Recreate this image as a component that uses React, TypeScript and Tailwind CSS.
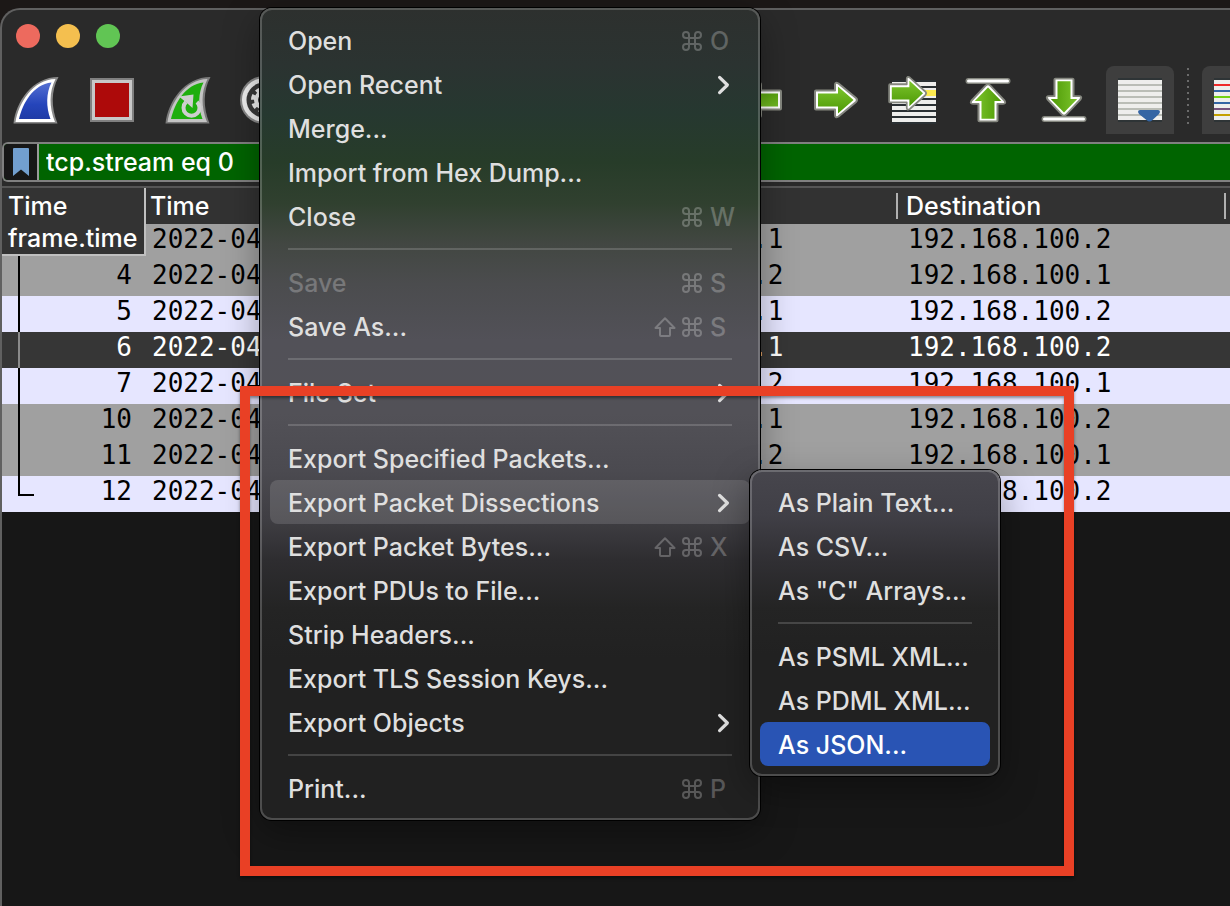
import type { ReactNode } from "react";
import { Folder, RefreshCw, Save, Search, X } from "lucide-react";

const SANS = "font-['Inter','Noto_Sans',sans-serif]";
const MONO = "font-['DejaVu_Sans_Mono','Liberation_Mono',monospace]";

type Packet = { no: string; src: string; dst: string; tone: "gray" | "lilac" | "selected" };

const packets: Packet[] = [
  { no: "", src: ".1", dst: "192.168.100.2", tone: "gray" },
  { no: "4", src: ".2", dst: "192.168.100.1", tone: "gray" },
  { no: "5", src: ".1", dst: "192.168.100.2", tone: "lilac" },
  { no: "6", src: ".1", dst: "192.168.100.2", tone: "selected" },
  { no: "7", src: ".2", dst: "192.168.100.1", tone: "lilac" },
  { no: "10", src: ".1", dst: "192.168.100.2", tone: "gray" },
  { no: "11", src: ".2", dst: "192.168.100.1", tone: "gray" },
  { no: "12", src: ".1", dst: "192.168.100.2", tone: "lilac" },
];

const tones = {
  gray: "bg-[#a0a0a0] text-black",
  lilac: "bg-[#e6e6ff] text-black",
  selected: "bg-[#363636] text-white",
};

type Item = {
  label: string;
  keys?: string;
  shift?: boolean;
  submenu?: boolean;
  disabled?: boolean;
  state?: "open" | "active";
};

const fileMenu: Item[][] = [
  [
    { label: "Open", keys: "O" },
    { label: "Open Recent", submenu: true },
    { label: "Merge..." },
    { label: "Import from Hex Dump..." },
    { label: "Close", keys: "W" },
  ],
  [
    { label: "Save", keys: "S", disabled: true },
    { label: "Save As...", keys: "S", shift: true },
  ],
  [{ label: "File Set", submenu: true }],
  [
    { label: "Export Specified Packets..." },
    { label: "Export Packet Dissections", submenu: true, state: "open" },
    { label: "Export Packet Bytes...", keys: "X", shift: true },
    { label: "Export PDUs to File..." },
    { label: "Strip Headers..." },
    { label: "Export TLS Session Keys..." },
    { label: "Export Objects", submenu: true },
  ],
  [{ label: "Print...", keys: "P" }],
];

const exportMenu: Item[][] = [
  [{ label: "As Plain Text..." }, { label: "As CSV..." }, { label: 'As "C" Arrays...' }],
  [
    { label: "As PSML XML..." },
    { label: "As PDML XML..." },
    { label: "As JSON...", state: "active" },
  ],
];

function CommandGlyph() {
  return (
    <svg viewBox="0 0 20 20" className="size-5" fill="none" stroke="currentColor" strokeWidth="2">
      <path d="M7 7V4a3 3 0 1 0-3 3h12a3 3 0 1 0-3-3v12a3 3 0 1 0 3-3H4a3 3 0 1 0 3 3V7" />
    </svg>
  );
}

function ShiftGlyph() {
  return (
    <svg viewBox="0 0 22 20" className="h-5 w-[22px]" fill="none" stroke="currentColor" strokeWidth="2" strokeLinejoin="round">
      <path d="M11 1.2 20.5 11H16v7a1 1 0 0 1-1 1H7a1 1 0 0 1-1-1v-7H1.5z" />
    </svg>
  );
}

function Menu({ groups, label, className }: { groups: Item[][]; label: string; className: string }) {
  return (
    <div
      role="menu"
      aria-label={label}
      className={`rounded-xl border-2 border-white/20 bg-origin-border p-2 text-[25px] leading-[38px] font-medium text-[#dfdfdf] ${className}`}
    >
      {groups.map((group, i) => (
        <div key={i} role="group">
          {i > 0 && (
            <div role="separator" className="flex h-[22px] items-center px-[18px]">
              <div className="h-0.5 w-full bg-white/16" />
            </div>
          )}
          {group.map((item) => (
            <button
              key={item.label}
              type="button"
              role="menuitem"
              disabled={item.disabled}
              className={`flex h-11 w-full items-center rounded-lg px-[18px] pt-0.5 text-left whitespace-nowrap ${
                item.state === "open" ? "bg-white/13" : ""
              } ${item.state === "active" ? "bg-[#2954b4] text-white" : ""}`}
            >
              <span className={`grow ${item.disabled ? "text-white/25" : ""}`}>{item.label}</span>
              {item.keys && (
                <span className="flex items-center gap-1.5 text-white/25">
                  {item.shift && <ShiftGlyph />}
                  <CommandGlyph />
                  <span className="w-6 pl-0.5">{item.keys}</span>
                </span>
              )}
              {item.submenu && (
                <svg viewBox="0 0 16 20" className="h-5 w-4" fill="none" stroke="currentColor" strokeWidth="3.2" strokeLinecap="round" strokeLinejoin="round">
                  <path d="M3.6 2.4 11.4 10l-7.8 7.6" />
                </svg>
              )}
            </button>
          ))}
        </div>
      ))}
    </div>
  );
}

function Tool({ label, pressed, children }: { label: string; pressed?: boolean; children: ReactNode }) {
  return (
    <button
      type="button"
      aria-label={label}
      className={`flex size-[68px] shrink-0 items-center justify-center rounded-t-lg text-[#d0d0d0] ${pressed ? "bg-[#3e3e3e]" : ""}`}
    >
      {children}
    </button>
  );
}

function ToolSeparator() {
  return (
    <div className="flex h-[62px] w-3 shrink-0 justify-center">
      <svg viewBox="0 0 2 62" className="h-full w-0.5">
        <path d="M1 2v60" stroke="#6b6b6b" strokeWidth="2" strokeDasharray="2 4" />
      </svg>
    </div>
  );
}

function Fin({ outer, rim, children }: { outer: string; rim: string; children: ReactNode }) {
  const d = "M1.500 47.500C4 26 20 1 46.500 1C39 15 39 31 45.500 47.500Z";
  return (
    <svg viewBox="0 0 48 48" className="size-12">
      <path d={d} fill={outer} />
      <path d="M3.500 46C6.500 27 21 3.500 43.500 3C37 16 37 31 43 46Z" fill={rim} />
      {children}
    </svg>
  );
}

const FIN_BODY = "M7 43C11 27 21 8.500 39.500 6.500C34 17 34 31 38.500 43Z";

function Arrow({ turn }: { turn: string }) {
  return (
    <g transform={turn}>
      <path
        d="M3 15.500q0-1 1-1h19V9q0-3.500 3.500-1.500L44 22q2 2 0 4L26.500 40.500Q23 42.500 23 39v-5.500H4q-1 0-1-1z"
        fill="#fff"
        stroke="#85877f"
        strokeWidth="2"
        strokeLinejoin="round"
      />
      <path d="M6 17.500h20v-6.500q0-.5.5 0L41.500 24 26.500 37q-.5.500-.5 0v-6.500H6z" fill="url(#green)" />
    </g>
  );
}

export default function App() {
  return (
    <div className={`flex min-h-screen flex-col bg-[#1c1817] pt-2 ${SANS}`}>
      <svg className="absolute size-0" aria-hidden="true">
        <defs>
          <linearGradient id="green" x1="0" y1="0" x2="0" y2="1">
            <stop offset="0" stopColor="#7cc42c" />
            <stop offset="1" stopColor="#4e9a06" />
          </linearGradient>
          <linearGradient id="blue" x1="0" y1="0" x2="0" y2="1">
            <stop offset="0" stopColor="#5570d2" />
            <stop offset="0.6" stopColor="#2545bb" />
            <stop offset="1" stopColor="#1f3ba6" />
          </linearGradient>
        </defs>
      </svg>

      <div className="flex grow flex-col overflow-hidden rounded-tl-[20px] border-t-2 border-l-2 border-[#606060] bg-[#2a2a2a]">
        <header className="flex h-[52px] items-center gap-4 pl-3.5">
          <button type="button" aria-label="Close window" className="size-6 rounded-full bg-[#ed6a5e]" />
          <button type="button" aria-label="Minimize window" className="size-6 rounded-full bg-[#f4bf4f]" />
          <button type="button" aria-label="Zoom window" className="size-6 rounded-full bg-[#61c554]" />
        </header>

        <div role="toolbar" aria-label="Capture" className="flex h-20 items-start gap-2 overflow-hidden pt-1">
          <Tool label="Start capture">
            <Fin outer="#8a8a8a" rim="#ffffff">
              <path d={FIN_BODY} fill="url(#blue)" />
            </Fin>
          </Tool>
          <Tool label="Stop capture">
            <svg viewBox="0 0 44 44" className="size-11">
              <path d="M0 0h44v44H0z" fill="#808080" />
              <path d="M2 2h40v40H2z" fill="#c8c8c8" />
              <path d="M5 5h34v34H5z" fill="#ad0a0a" />
            </svg>
          </Tool>
          <Tool label="Restart capture">
            <Fin outer="#7a7a7a" rim="#c4c4c4">
              <path d={FIN_BODY} fill="#1fae0e" />
              <path d="M33 26a8 8 0 1 1-11 0" fill="none" stroke="#cfcfcf" strokeWidth="4" />
              <path d="M15 20.500 29.500 18.500 28.500 32l-4.500-4z" fill="#cfcfcf" />
            </Fin>
          </Tool>
          <Tool label="Capture options">
            <svg viewBox="0 0 48 48" className="size-12">
              <circle cx="24" cy="24" r="24" fill="#8a8a8a" />
              <circle cx="24" cy="24" r="22" fill="#f0f0f0" />
              <circle cx="24" cy="24" r="17.500" fill="#3a3a3a" />
              <circle cx="24" cy="24" r="11" fill="none" stroke="#f0f0f0" strokeWidth="4" strokeDasharray="5 3.640" />
              <circle cx="24" cy="24" r="8" fill="none" stroke="#f0f0f0" strokeWidth="4" />
            </svg>
          </Tool>
          <ToolSeparator />
          <Tool label="Open file"><Folder size={40} /></Tool>
          <Tool label="Save file"><Save size={40} /></Tool>
          <Tool label="Close file"><X size={40} /></Tool>
          <Tool label="Reload file"><RefreshCw size={40} /></Tool>
          <ToolSeparator />
          <Tool label="Find packet"><Search size={40} /></Tool>
          <Tool label="Previous packet">
            <svg viewBox="0 0 48 48" className="size-12"><Arrow turn="rotate(180 24 24)" /></svg>
          </Tool>
          <Tool label="Next packet">
            <svg viewBox="0 0 48 48" className="size-12"><Arrow turn="" /></svg>
          </Tool>
          <Tool label="Go to packet">
            <svg viewBox="0 0 48 48" className="size-12">
              <path d="M4 4h44v44H4z" fill="#2a3033" />
              <path d="M4 6h44v4H4zM4 12h44v10H4zM4 24h44v4H4zM4 30h44v4H4zM4 36h44v4H4zM4 42h44v4H4z" fill="#eeeeec" />
              <path d="M34 14h14v6H34z" fill="#fce94f" />
              <Arrow turn="translate(-1.500 -5.500) scale(0.88 0.95)" />
            </svg>
          </Tool>
          <Tool label="First packet">
            <svg viewBox="0 0 48 48" className="size-12">
              <path d="M4.500 5h39" stroke="#85877f" strokeWidth="6" strokeLinecap="round" />
              <path d="M4.500 5h39" stroke="#fff" strokeWidth="3" strokeLinecap="round" />
              <Arrow turn="translate(0 48) rotate(-90) scale(0.88 1)" />
            </svg>
          </Tool>
          <Tool label="Last packet">
            <svg viewBox="0 0 48 48" className="size-12">
              <path d="M4.500 43h39" stroke="#85877f" strokeWidth="6" strokeLinecap="round" />
              <path d="M4.500 43h39" stroke="#fff" strokeWidth="3" strokeLinecap="round" />
              <Arrow turn="translate(48 0) rotate(90) scale(0.88 1)" />
            </svg>
          </Tool>
          <Tool label="Auto-scroll" pressed>
            <svg viewBox="0 0 44 44" className="size-11">
              <path d="M0 0h44v44H0z" fill="#2e3436" />
              <path d="M0 2h44v40H0z" fill="#eeeeec" />
              <path d="M0 7h44M0 13h44M0 19h44M0 25h44M0 31h44M0 37h44" stroke="#babdb6" strokeWidth="2" />
              <path d="M20 34q0-2 2-2h18q2 0 2 2l-1 2-6.500 6q-3 3-6 0L21 36z" fill="#3465a4" />
            </svg>
          </Tool>
          <ToolSeparator />
          <Tool label="Colorize" pressed>
            <svg viewBox="0 0 44 44" className="size-11">
              <path d="M0 0h44v44H0z" fill="#2e3436" />
              <path d="M0 2h44v40H0z" fill="#eeeeec" />
              <path d="M0 7h44" stroke="#ef2929" strokeWidth="2" />
              <path d="M0 13h44M0 25h44" stroke="#3465a4" strokeWidth="2" />
              <path d="M0 19h44" stroke="#73d216" strokeWidth="2" />
              <path d="M0 31h44" stroke="#75507b" strokeWidth="2" />
              <path d="M0 37h44" stroke="#c4a000" strokeWidth="2" />
            </svg>
          </Tool>
        </div>

        <div className="flex h-10 shrink-0 overflow-hidden rounded-l-md border-2 border-r-0 border-[#808080] bg-[#006400]">
          <button type="button" aria-label="Filter bookmarks" className="flex w-[35px] items-center justify-center border-r-2 border-[#9a9a9a] bg-[#171717]">
            <svg viewBox="0 0 16 28" className="h-7 w-4">
              <path d="M0 1q0-1 1-1h14q1 0 1 1v27l-8-6.500L0 28z" fill="#729fcf" />
            </svg>
          </button>
          <input
            aria-label="Display filter"
            defaultValue="tcp.stream eq 0"
            className="min-w-0 grow bg-transparent pt-0.5 pl-[7px] text-[25px] font-medium text-white outline-none"
          />
        </div>

        <main className="relative mt-1 flex grow flex-col border-t-2 border-[#555555] bg-[#171717]">
          <table className="w-full table-fixed border-collapse text-left">
            <colgroup>
              <col className="w-36" />
              <col className="w-[600px]" />
              <col className="w-[150px]" />
              <col />
            </colgroup>
            <thead className="bg-[#323232] text-[25px] leading-[30px] text-white">
              <tr className="h-9">
                <th aria-label="Number" className="p-0" />
                <th className="p-0 pl-1 font-medium">Time</th>
                <th aria-label="Source" className="p-0" />
                <th className="p-0 font-medium">
                  <div className="mr-1 flex h-[26px] items-center border-x-2 border-[#b0b0b0] pl-2">Destination</div>
                </th>
              </tr>
            </thead>
            <tbody className={`text-[26px] leading-[30px] ${MONO}`}>
              {packets.map((p, i) => (
                <tr key={i} className={`h-9 ${tones[p.tone]}`}>
                  <td className="p-0">
                    <div className="flex h-9 items-start pr-3.5">
                      <span className={`ml-4 w-4 border-l-2 ${p.tone === "selected" ? "border-[#8a8a8a]" : "border-black"} ${i === packets.length - 1 ? "h-5 border-b-2" : "h-9"}`} />
                      <span className="grow text-right">{p.no}</span>
                    </div>
                  </td>
                  <td className="p-0 pl-1.5 align-top">2022-04</td>
                  <td className="p-0 pl-1.5 align-top">{p.src}</td>
                  <td className="p-0 pl-3 align-top">{p.dst}</td>
                </tr>
              ))}
            </tbody>
          </table>
          <div role="tooltip" className="absolute top-0 left-0 flex h-[68px] w-36 flex-col justify-end border-r-2 border-b-2 border-[#c0c0c0] bg-[#333333] pl-1.5 text-[25px] leading-8 font-medium text-white">
            <span>Time</span>
            <span>frame.time</span>
          </div>
        </main>
      </div>

      <Menu
        label="File"
        groups={fileMenu}
        className="absolute top-2 left-[260px] w-[500px] bg-[linear-gradient(180deg,#2d302e_0%,#2b3331_7%,#263830_13%,#273c29_19%,#30402f_24%,#424742_29%,#4b4c4e_34%,#525158_41%,#525157_50%,#4b4a50_57%,#3f3e43_63%,#2e2d30_68%,#242424_74%,#212121_80%,#212121_100%)] shadow-[0_0_0_1px_#000,0_12px_36px_rgba(0,0,0,0.35)]"
      />
      <Menu
        label="Export Packet Dissections"
        groups={exportMenu}
        className="absolute top-[470px] left-[750px] w-[250px] bg-[linear-gradient(180deg,#47464d_0%,#403f46_15%,#302f33_30%,#242424_45%,#212121_60%,#212121_100%)] shadow-[0_0_0_1px_#000,0_12px_36px_rgba(0,0,0,0.35)]"
      />
      <div className="pointer-events-none absolute top-[386px] left-[240px] h-[490px] w-[834px] border-10 border-[#e94025] shadow-[0_2px_3px_rgba(0,0,0,0.4),inset_0_2px_3px_rgba(0,0,0,0.4)]" />
    </div>
  );
}
